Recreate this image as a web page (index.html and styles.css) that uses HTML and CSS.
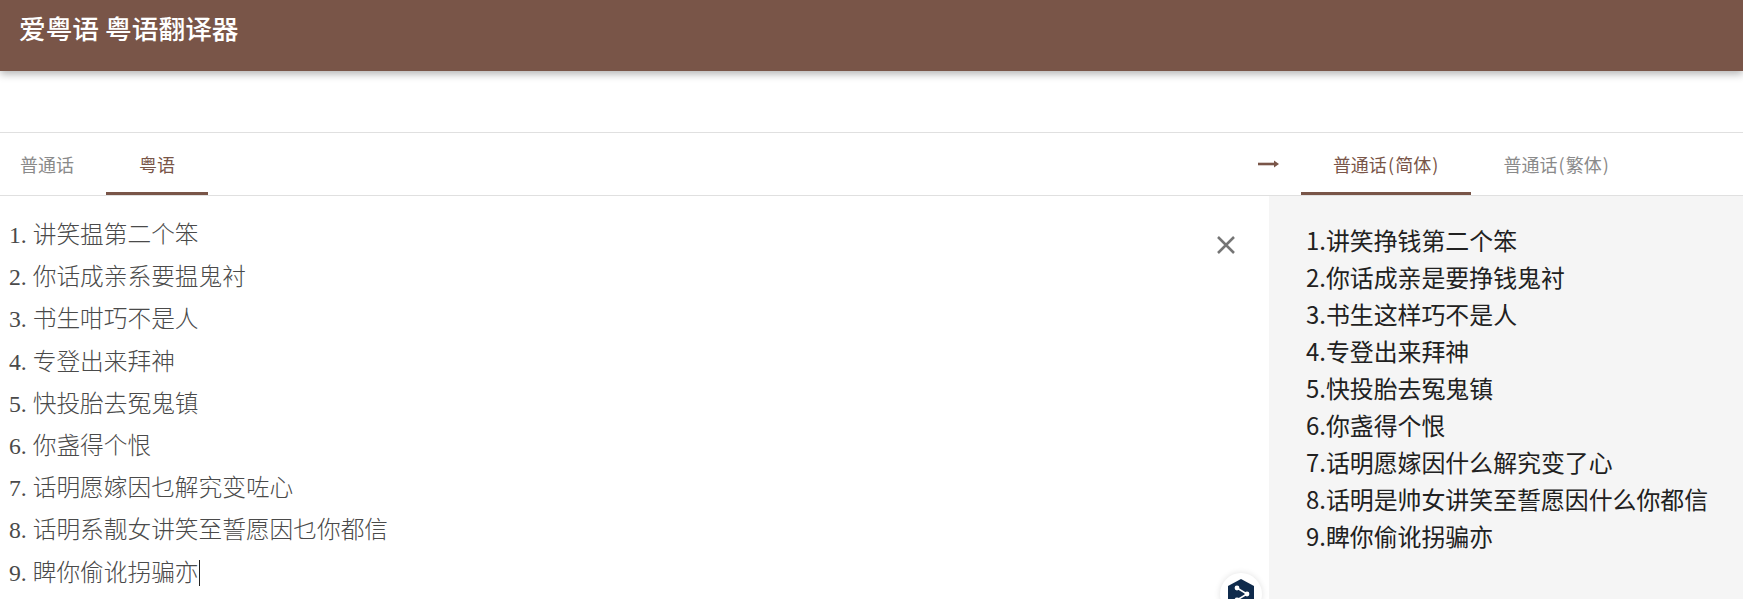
FILE: index.html
```html
<!DOCTYPE html>
<html>
<head>
  <title>爱粤语 粤语翻译器</title>
  <link rel="stylesheet" href="styles.css">
</head>
<body>
  <header class="topbar">爱粤语 粤语翻译器</header>

  <div class="tabbar">
    <div class="tabs">
      <span class="tab tab-first">普通话</span>
      <span class="tab active">粤语</span>
    </div>
    <div class="tabs tabs-right">
      <svg class="arrow" width="21" height="12" viewBox="0 0 21 12">
        <path d="M0 6h18" fill="none" stroke="#795548" stroke-width="2.6"/>
        <path d="M16 2.5L21 6l-5 3.5z" fill="#795548"/>
      </svg>
      <span class="tab active">普通话<span class="paren">(</span>简体<span class="paren">)</span></span>
      <span class="tab">普通话<span class="paren">(</span>繁体<span class="paren">)</span></span>
    </div>
  </div>

  <main class="panes">
    <section class="source">
      <div class="source-text">
        <div>1. 讲笑揾第二个笨</div>
        <div>2. 你话成亲系要揾鬼衬</div>
        <div>3. 书生咁巧不是人</div>
        <div>4. 专登出来拜神</div>
        <div>5. 快投胎去冤鬼镇</div>
        <div>6. 你盏得个恨</div>
        <div>7. 话明愿嫁因乜解究变咗心</div>
        <div>8. 话明系靓女讲笑至誓愿因乜你都信</div>
        <div><span class="caret">9. 睥你偷讹拐骗亦</span></div>
      </div>
      <svg class="clear" width="20" height="20" viewBox="0 0 20 20">
        <path d="M2 2l16 16M18 2L2 18" fill="none" stroke="#757575" stroke-width="2.5"/>
      </svg>
      <div class="badge">
        <svg width="26" height="30" viewBox="0 0 26 30">
          <path d="M13 0l13 7v16l-13 7-13-7V7z" fill="#0f2b4c"/>
          <path d="M9 9l10 6-10 6" fill="none" stroke="#fff" stroke-width="1.6"/>
          <circle cx="9" cy="9" r="2.4" fill="#fff"/>
          <circle cx="19" cy="15" r="2.4" fill="#fff"/>
          <circle cx="9" cy="21" r="2.4" fill="#fff"/>
        </svg>
      </div>
    </section>
    <section class="result">
      <div>1.讲笑挣钱第二个笨</div>
      <div>2.你话成亲是要挣钱鬼衬</div>
      <div>3.书生这样巧不是人</div>
      <div>4.专登出来拜神</div>
      <div>5.快投胎去冤鬼镇</div>
      <div>6.你盏得个恨</div>
      <div>7.话明愿嫁因什么解究变了心</div>
      <div>8.话明是帅女讲笑至誓愿因什么你都信</div>
      <div>9.睥你偷讹拐骗亦</div>
    </section>
  </main>
</body>
</html>
```

FILE: styles.css
```css
html, body {
  height: 100%;
  overflow: hidden;
}
body {
  margin: 0;
  font-family: "Noto Sans CJK SC", "Noto Sans", sans-serif;
  background: #fff;
}
.topbar {
  position: relative;
  height: 71px;
  box-sizing: border-box;
  padding: 9px 19px;
  background: #795548;
  color: #fff;
  font-size: 26.7px;
  font-weight: 500;
  line-height: 38px;
  box-shadow: 0 3px 8px rgba(0,0,0,0.3);
}
.tabbar {
  display: flex;
  justify-content: space-between;
  height: 62px;
  margin-top: 61px;
  border-top: 1px solid #e0e0e0;
  border-bottom: 1px solid #e0e0e0;
}
.tabs {
  display: flex;
  align-items: stretch;
}
.tabs-right {
  padding-right: 101px;
}
.arrow {
  align-self: center;
  margin-right: 22px;
}
.tab {
  padding: 0 32px;
  height: 59px;
  line-height: 62px;
  font-size: 18px;
  color: #8a8a8a;
}
.tab-first {
  padding-left: 20px;
}
.tab-first + .tab {
  padding: 0 33px;
}
.paren {
  padding: 0 1.1px;
}
.tab.active {
  color: #795548;
  border-bottom: 3px solid #795548;
}
.panes {
  display: flex;
}
.source {
  position: relative;
  flex: 1;
  height: 403px;
  padding: 18px 9px 0;
  font-family: "Liberation Serif", "Noto Sans CJK SC", serif;
  font-size: 23.7px;
  font-weight: 300;
  line-height: 42.2px;
  color: #4a4a4a;
}
.caret {
  border-right: 1px solid #222;
}
.clear {
  position: absolute;
  top: 39px;
  right: 33px;
}
.badge {
  position: absolute;
  top: 377px;
  left: 1220px;
  width: 42px;
  height: 42px;
  display: flex;
  justify-content: center;
  padding-top: 6px;
  box-sizing: border-box;
  border-radius: 50%;
  background: #fff;
  box-shadow: 0 0 6px rgba(0,0,0,0.12);
}
.result {
  width: 474px;
  height: 403px;
  box-sizing: border-box;
  padding: 25px 0 0 37px;
  background: #f5f5f5;
  color: #212121;
  font-size: 23.9px;
  line-height: 37px;
}
```
